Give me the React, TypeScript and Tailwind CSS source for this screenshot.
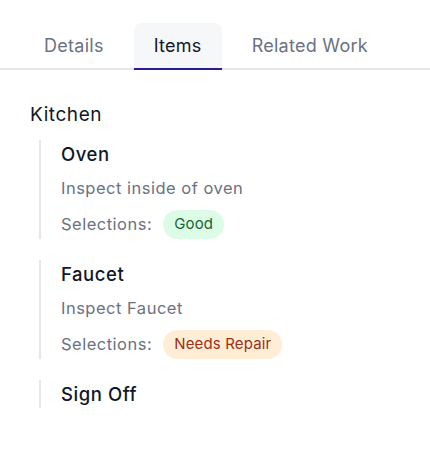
const tabs = ["Details", "Items", "Related Work"];

type Item = {
  title: string;
  description?: string;
  selection?: { label: string; tone: "good" | "repair" };
};

const items: Item[] = [
  {
    title: "Oven",
    description: "Inspect inside of oven",
    selection: { label: "Good", tone: "good" },
  },
  {
    title: "Faucet",
    description: "Inspect Faucet",
    selection: { label: "Needs Repair", tone: "repair" },
  },
  { title: "Sign Off" },
];

export default function App() {
  return (
    <div className="w-[430px] h-[455px] bg-white font-['Inter','Liberation_Sans',sans-serif] antialiased">
      {/* Tabs */}
      <div className="pt-[23px] flex pl-6 gap-2.5 border-b-2 border-gray-200">
        {tabs.map((tab) => {
          const active = tab === "Items";
          return (
            <div
              key={tab}
              className={
                active
                  ? "h-[47px] -mb-[2px] px-5 flex items-center text-lg tracking-[0.015em] text-gray-900 bg-[#f6f7f9] rounded-t-lg border-b-2 border-[#2a1a96]"
                  : "h-[47px] -mb-[2px] px-5 flex items-center text-lg tracking-[0.015em] text-gray-500 border-b-2 border-transparent"
              }
            >
              {tab}
            </div>
          );
        })}
      </div>

      {/* Content */}
      <div className="px-[30px]">
        <h2 className="mt-[31px] text-[19px] leading-7 tracking-[0.03em] text-gray-900">
          Kitchen
        </h2>
        <div className="mt-[11px] flex flex-col gap-[21px]">
          {items.map((item) => (
            <div
              key={item.title}
              className="ml-[9px] border-l-2 border-gray-200 pl-5"
            >
              <div className="text-[18.5px] leading-7 font-medium tracking-[0.03em] text-gray-900">
                {item.title}
              </div>
              {item.description && (
                <div className="mt-2 text-[16.5px] leading-6 tracking-[0.03em] text-gray-500">
                  {item.description}
                </div>
              )}
              {item.selection && (
                <div className="mt-[10px] flex items-center gap-[11px] text-[16.5px] tracking-[0.03em] text-gray-500">
                  <span>Selections:</span>
                  <span
                    className={
                      item.selection.tone === "good"
                        ? "h-[29px] px-[11px] flex items-center rounded-full text-[15px] tracking-[0.01em] bg-[#dcfce7] text-[#166534]"
                        : "h-[29px] px-[11px] flex items-center rounded-full text-[15px] tracking-[0.01em] bg-[#ffedd5] text-[#9f2f16]"
                    }
                  >
                    {item.selection.label}
                  </span>
                </div>
              )}
            </div>
          ))}
        </div>
      </div>
    </div>
  );
}
